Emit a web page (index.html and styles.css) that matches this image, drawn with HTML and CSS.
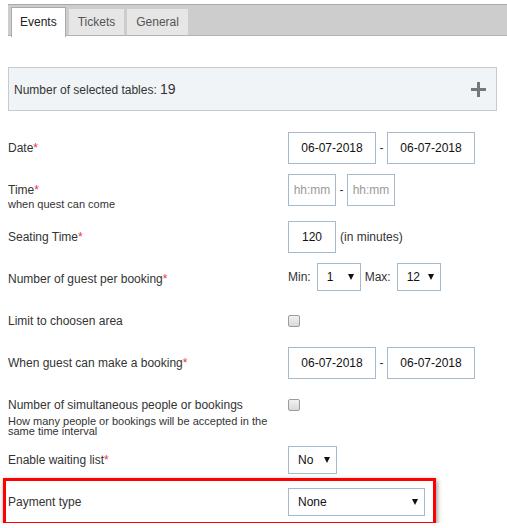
FILE: index.html
```html
<!DOCTYPE html>
<html>
<head>
<meta charset="utf-8">
<link rel="stylesheet" href="styles.css">
</head>
<body>
<div class="page">
  <div class="tabs">
    <span class="tab tab--active">Events</span>
    <span class="tab">Tickets</span>
    <span class="tab">General</span>
  </div>

  <div class="panel">
    <span>Number of selected tables: <span class="count">19</span></span>
    <svg class="plus" width="15" height="15" viewBox="0 0 15 15"><rect x="6" y="0" width="3" height="15" fill="#777"/><rect x="0" y="6" width="15" height="3" fill="#777"/></svg>
  </div>

  <div class="form">
    <div class="row">
      <div class="label"><div class="main">Date<span class="req">*</span></div></div>
      <div class="ctrl">
        <span class="input input--date">06-07-2018</span><span class="dash">-</span><span class="input input--date">06-07-2018</span>
      </div>
    </div>

    <div class="row row--time">
      <div class="label">
        <div class="main">Time<span class="req">*</span></div>
        <div class="sub sub--one">when quest can come</div>
      </div>
      <div class="ctrl">
        <span class="input input--time">hh:mm</span><span class="dash">-</span><span class="input input--time">hh:mm</span>
      </div>
    </div>

    <div class="row">
      <div class="label"><div class="main">Seating Time<span class="req">*</span></div></div>
      <div class="ctrl">
        <span class="input input--num">120</span><span class="note">(in minutes)</span>
      </div>
    </div>

    <div class="row row--guest">
      <div class="label"><div class="main">Number of guest per booking<span class="req">*</span></div></div>
      <div class="ctrl">
        <span class="mini-label">Min:</span>
        <span class="select select--small"><span>1</span><span class="caret"></span></span>
        <span class="mini-label mini-label--after">Max:</span>
        <span class="select select--small"><span>12</span><span class="caret"></span></span>
      </div>
    </div>

    <div class="row">
      <div class="label"><div class="main">Limit to choosen area</div></div>
      <div class="ctrl"><span class="check"></span></div>
    </div>

    <div class="row">
      <div class="label"><div class="main">When guest can make a booking<span class="req">*</span></div></div>
      <div class="ctrl">
        <span class="input input--date">06-07-2018</span><span class="dash">-</span><span class="input input--date">06-07-2018</span>
      </div>
    </div>

    <div class="row row--simul">
      <div class="label">
        <div class="main">Number of simultaneous people or bookings</div>
        <div class="sub sub--two">How many people or bookings will be accepted in the same time interval</div>
      </div>
      <div class="ctrl"><span class="check"></span></div>
    </div>

    <div class="row">
      <div class="label"><div class="main">Enable waiting list<span class="req">*</span></div></div>
      <div class="ctrl">
        <span class="select select--no"><span>No</span><span class="caret"></span></span>
      </div>
    </div>

    <div class="row row--pay">
      <div class="label"><div class="main">Payment type</div></div>
      <div class="ctrl">
        <span class="select select--wide"><span>None</span><span class="caret"></span></span>
      </div>
      <div class="highlight"></div>
    </div>
  </div>
</div>
</body>
</html>
```

FILE: styles.css
```css
html, body {
  margin: 0;
  padding: 0;
  background: #fff;
}

body {
  font-family: "Liberation Sans", Arial, sans-serif;
  font-size: 12px;
  color: #333;
  overflow: hidden;
}

.page {
  padding: 4px 10px 0 8px;
}

/* Tabs */
.tabs {
  display: flex;
  align-items: flex-end;
  gap: 3px;
  height: 30px;
  padding: 0 3px;
  margin-right: -10px;
  background: #cdcdcd;
  border-top: 1px solid #a9a9a9;
  border-bottom: 1px solid #b3b3b3;
}

.tab {
  height: 26px;
  line-height: 26px;
  padding: 0 9px;
  background: #e6e6e6;
  color: #555;
}

.tab--active {
  height: 29px;
  line-height: 28px;
  padding: 0 8px;
  margin-bottom: -2px;
  background: #fff;
  border: 1px solid #aaa;
  border-bottom: 0;
  color: #222;
}

/* Panel */
.panel {
  margin-top: 31px;
  height: 42px;
  border: 1px solid #cacaca;
  background: #f1f4f7;
  display: flex;
  align-items: center;
  justify-content: space-between;
  padding: 0 10px 0 5px;
  color: #333;
}

.count {
  font-size: 14px;
}

.plus {
  display: block;
}

/* Form */
.form {
  margin-top: 16px;
}

.row {
  display: flex;
  align-items: center;
  height: 42px;
}

.row--time {
  margin-bottom: 5px;
}

.row--simul {
  margin-bottom: 13px;
}

.row--guest .ctrl {
  margin-top: -4px;
}

.row--pay {
  position: relative;
}

.label {
  flex: none;
  width: 270px;
  margin-right: 10px;
  color: #333;
}

.main {
  line-height: 16px;
}

.req {
  color: #f0333d;
}

.sub {
  font-size: 11px;
  color: #333;
}

.sub--one {
  line-height: 12px;
  margin-bottom: -12px;
}

.sub--two {
  line-height: 10px;
  margin-top: 3px;
  margin-bottom: -23px;
}

.ctrl {
  display: flex;
  align-items: center;
}

.input {
  box-sizing: border-box;
  height: 32px;
  border: 1px solid #a4bad0;
  display: inline-flex;
  align-items: center;
  justify-content: center;
  font-size: 12px;
  color: #111;
  background: #fff;
}

.input--date {
  width: 88px;
}

.input--time {
  width: 48px;
  color: #9a9a9a;
}

.input--num {
  width: 48px;
}

.dash {
  margin: 0 3.5px;
  color: #333;
}

.note {
  margin-left: 4px;
  color: #333;
}

.mini-label {
  margin-right: 6px;
  color: #333;
}

.mini-label--after {
  margin-left: 4px;
}

.select {
  box-sizing: border-box;
  height: 28px;
  border: 1px solid #a4bad0;
  display: flex;
  align-items: center;
  justify-content: space-between;
  padding: 0 6px 0 9px;
  color: #111;
  background: #fff;
}

.select--small {
  width: 44px;
}

.select--no {
  width: 49px;
}

.select--wide {
  width: 137px;
}

.caret {
  width: 0;
  height: 0;
  border-left: 3.5px solid transparent;
  border-right: 3.5px solid transparent;
  border-top: 6px solid #111;
}

.check {
  box-sizing: border-box;
  width: 12px;
  height: 12px;
  border: 1px solid #9c9c9c;
  border-radius: 2px;
  background: linear-gradient(#f2f2f2, #d9d9d9);
}

.highlight {
  position: absolute;
  left: -5px;
  top: -3px;
  width: 433px;
  height: 47px;
  box-sizing: border-box;
  border: 3px solid #ff0000;
  box-shadow: 1px 2px 5px rgba(0, 0, 0, 0.45);
  pointer-events: none;
}
```
